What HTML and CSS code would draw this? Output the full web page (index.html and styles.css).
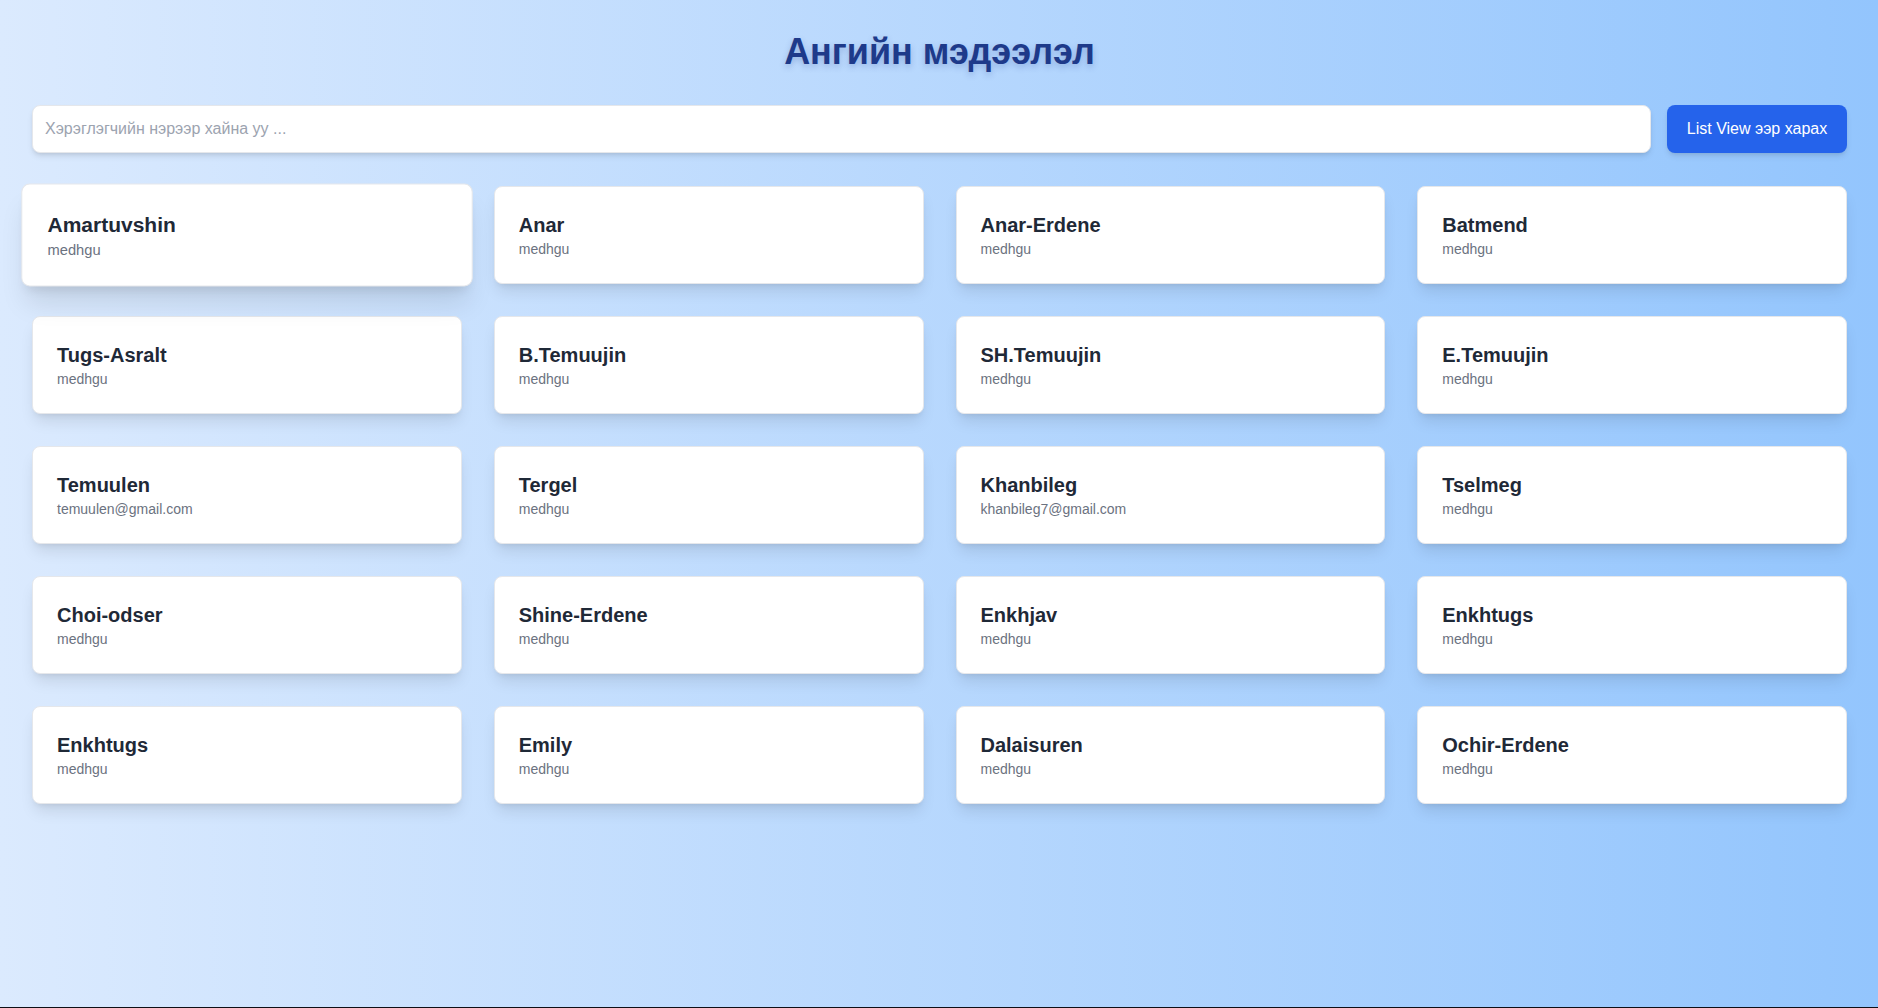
FILE: index.html
```html
<!DOCTYPE html>
<html lang="mn">
<head>
<meta charset="utf-8">
<title>Ангийн мэдээлэл</title>
<link rel="stylesheet" href="styles.css">
</head>
<body>
<main class="page">
  <h1 class="title">Ангийн мэдээлэл</h1>
  <div class="search-row">
    <input class="search-input" type="text" placeholder="Хэрэглэгчийн нэрээр хайна уу ...">
    <button class="view-btn" type="button">List View ээр харах</button>
  </div>
  <div class="grid">
    <div class="card is-hover"><div class="name">Amartuvshin</div><div class="email">medhgu</div></div>
    <div class="card"><div class="name">Anar</div><div class="email">medhgu</div></div>
    <div class="card"><div class="name">Anar-Erdene</div><div class="email">medhgu</div></div>
    <div class="card"><div class="name">Batmend</div><div class="email">medhgu</div></div>
    <div class="card"><div class="name">Tugs-Asralt</div><div class="email">medhgu</div></div>
    <div class="card"><div class="name">B.Temuujin</div><div class="email">medhgu</div></div>
    <div class="card"><div class="name">SH.Temuujin</div><div class="email">medhgu</div></div>
    <div class="card"><div class="name">E.Temuujin</div><div class="email">medhgu</div></div>
    <div class="card"><div class="name">Temuulen</div><div class="email">temuulen@gmail.com</div></div>
    <div class="card"><div class="name">Tergel</div><div class="email">medhgu</div></div>
    <div class="card"><div class="name">Khanbileg</div><div class="email">khanbileg7@gmail.com</div></div>
    <div class="card"><div class="name">Tselmeg</div><div class="email">medhgu</div></div>
    <div class="card"><div class="name">Choi-odser</div><div class="email">medhgu</div></div>
    <div class="card"><div class="name">Shine-Erdene</div><div class="email">medhgu</div></div>
    <div class="card"><div class="name">Enkhjav</div><div class="email">medhgu</div></div>
    <div class="card"><div class="name">Enkhtugs</div><div class="email">medhgu</div></div>
    <div class="card"><div class="name">Enkhtugs</div><div class="email">medhgu</div></div>
    <div class="card"><div class="name">Emily</div><div class="email">medhgu</div></div>
    <div class="card"><div class="name">Dalaisuren</div><div class="email">medhgu</div></div>
    <div class="card"><div class="name">Ochir-Erdene</div><div class="email">medhgu</div></div>
  </div>
</main>
</body>
</html>
```

FILE: styles.css
```css
html {
  background: #0e0f16;
}
body {
  margin: 0;
  font-family: "Liberation Sans", Arial, sans-serif;
}
.page {
  min-height: 1007px;
  box-sizing: border-box;
  padding: 32px 31px 32px 32px;
  background: linear-gradient(to right, #dbeafe, #93c5fd);
}
.title {
  margin: 0 0 33px;
  text-align: center;
  font-size: 36px;
  line-height: 40px;
  font-weight: 700;
  color: #1e3a8a;
  text-shadow: 0 3px 6px rgba(30, 58, 138, 0.25);
}
.search-row {
  display: flex;
  gap: 16px;
  margin-bottom: 33px;
}
.search-input {
  flex: 1;
  height: 48px;
  box-sizing: border-box;
  padding: 0 12px;
  border: 1px solid #e5e7eb;
  border-radius: 8px;
  background: #fff;
  font-family: inherit;
  font-size: 16px;
  color: #111827;
  box-shadow: 0 4px 6px -1px rgba(0, 0, 0, 0.1), 0 2px 4px -2px rgba(0, 0, 0, 0.1);
  outline: none;
}
.search-input::placeholder {
  color: #9ca3af;
}
.view-btn {
  width: 180px;
  height: 48px;
  border: none;
  border-radius: 8px;
  background: #2563eb;
  color: #fff;
  font-family: inherit;
  font-size: 16px;
  box-shadow: 0 4px 6px -1px rgba(0, 0, 0, 0.1), 0 2px 4px -2px rgba(0, 0, 0, 0.1);
  cursor: pointer;
}
.grid {
  display: grid;
  grid-template-columns: repeat(4, 1fr);
  gap: 32px;
}
.card {
  background: #fff;
  border: 1px solid #e5e7eb;
  border-radius: 8px;
  padding: 24px;
  box-shadow: 0 10px 15px -3px rgba(0, 0, 0, 0.1), 0 4px 6px -4px rgba(0, 0, 0, 0.1);
}
.card.is-hover {
  transform: scale(1.05);
  box-shadow: 0 20px 25px -5px rgba(0, 0, 0, 0.1), 0 8px 10px -6px rgba(0, 0, 0, 0.1);
}
.name {
  font-size: 20px;
  line-height: 28px;
  font-weight: 700;
  color: #1f2937;
}
.email {
  font-size: 14px;
  line-height: 20px;
  color: #6b7280;
}
```
